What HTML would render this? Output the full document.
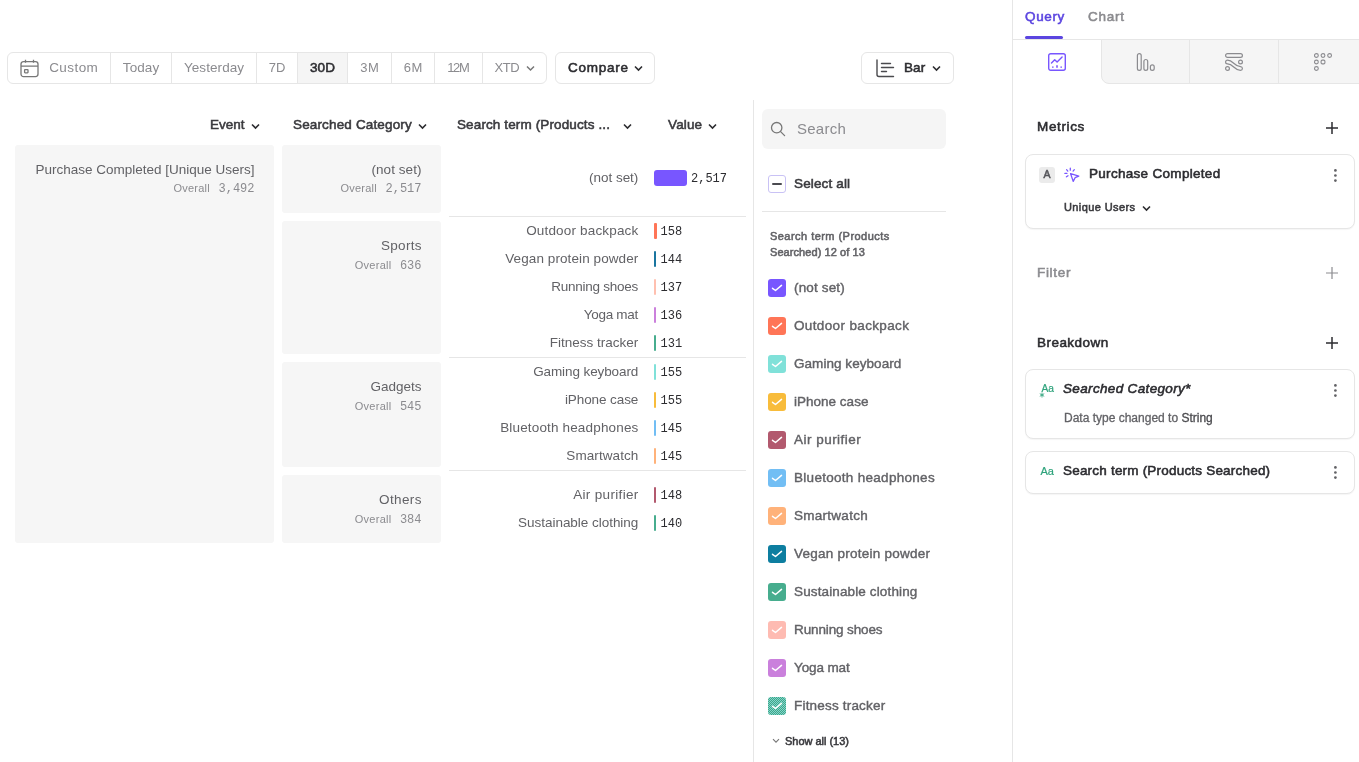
<!DOCTYPE html>
<html><head><meta charset="utf-8">
<style>
*{box-sizing:border-box;margin:0;padding:0}
html,body{width:1359px;height:762px;overflow:hidden;background:#fff}
body{will-change:transform;font-family:"Liberation Sans",sans-serif;color:#626266;position:relative;font-size:13.500px}
.abs{position:absolute}
.t{position:absolute;white-space:nowrap;line-height:1}
.r{text-align:right}
.mono{font-family:"Liberation Mono",monospace}
/* toolbar */
#tb{left:7px;top:52px;width:540px;height:32px;border:1px solid #e6e6e6;border-radius:6px;background:#fff}
.seg{position:absolute;margin-left:-1px;top:0;height:30px;border-left:1px solid #e6e6e6;font-size:13.500px;line-height:29px;text-align:center;color:#8b8b8f}
.btn{position:absolute;top:52px;height:32px;border:1px solid #e6e6e6;border-radius:6px;background:#fff}
.card{position:absolute;background:#f6f6f6;border-radius:3px}
.hl{position:absolute;height:1px;background:#e6e6e6}
.cb{position:absolute;left:768px;width:18px;height:18px;border-radius:3px}
.lg{position:absolute;margin-top:.45px;left:794px;font-size:13.500px;line-height:1;white-space:nowrap;color:#626266;-webkit-text-stroke:.4px}
.bar{position:absolute;left:654px;width:2px;height:16px;border-radius:1px}
.lab{position:absolute;margin-top:.9px;right:720.700px;font-size:13.500px;line-height:1;white-space:nowrap;color:#626266}
.val{position:absolute;margin-top:.7px;left:660.500px;font-size:12px;line-height:1;white-space:nowrap;color:#2c2c30;font-family:"Liberation Mono",monospace}
.pc{position:absolute;left:1025px;width:330px;border:1px solid #e6e6e6;border-radius:8px;background:#fff;box-shadow:0 1px 1px rgba(0,0,0,.04)}
</style></head><body>

<!-- toolbar -->
<div class="abs" id="tb">
  <svg class="abs" style="left:12px;top:6px" width="19" height="19" viewBox="0 0 19 19" fill="none" stroke="#777" stroke-width="1.3"><rect x="1" y="2.6" width="17" height="15" rx="2.5"></rect><path d="M1 7.2h17M5.5 .8v3M13.5 .8v3"></path><rect x="4.6" y="10.6" width="3.4" height="3.2" rx=".5"></rect></svg>
  <div class="seg" style="left: 0px; width: 103px; border-left: 0px; padding-left: 30px; letter-spacing: 0.44px; text-indent: 0.44px;">Custom</div>
  <div class="seg" style="left: 103px; width: 61px; letter-spacing: 0.1px; text-indent: 0.1px;">Today</div>
  <div class="seg" style="left: 164px; width: 85px; letter-spacing: 0.08px; text-indent: 0.08px;">Yesterday</div>
  <div class="seg" style="left: 249px; width: 41px; letter-spacing: 0.07px; text-indent: 0.07px; font-size: 13px;">7D</div>
  <div class="seg" style="left: 290px; width: 50px; background: rgb(245, 245, 245); color: rgb(44, 44, 48); -webkit-text-stroke: 0.55px; letter-spacing: 0.22px; text-indent: 0.22px;">30D</div>
  <div class="seg" style="left: 340px; width: 44px; letter-spacing: 0.39px; text-indent: 0.39px; font-size: 13px;">3M</div>
  <div class="seg" style="left: 384px; width: 43px; letter-spacing: 0.39px; text-indent: 0.39px; font-size: 13px;">6M</div>
  <div class="seg" style="left: 427px; width: 48px; letter-spacing: -1.42px; text-indent: -1.42px; font-size: 13px;">12M</div>
  <div class="seg" style="left: 475px; width: 63px; padding-right: 14px; letter-spacing: -0.4px; text-indent: -0.4px; font-size: 13px;">XTD</div>
  <svg class="abs" style="left:518px;top:12px" width="9" height="7" viewBox="0 0 9 7" fill="none" stroke="#777" stroke-width="1.5"><path d="M1 1.5l3.5 3.5l3.5-3.5"></path></svg>
</div>
<div class="btn" style="left:555px;width:100px">
  <div class="t" style="left: 12px; top: 7.5px; font-size: 13.5px; margin-top: .45px; -webkit-text-stroke: 0.55px; color: rgb(44, 44, 48); letter-spacing: 0.76px;">Compare</div>
  <svg class="abs" style="left:77.500px;top:12px" width="9" height="7" viewBox="0 0 9 7" fill="none" stroke="#2c2c30" stroke-width="1.6"><path d="M1 1.5l3.5 3.5l3.5-3.5"></path></svg>
</div>
<div class="btn" style="left:861px;width:93px">
  <svg class="abs" style="left:14px;top:6px" width="19" height="19" viewBox="0 0 19 19" fill="none" stroke="#4a4a4e" stroke-width="1.4" stroke-linecap="round"><path d="M1 1v14.5q0 2 2 2h14.5"></path><path d="M5.5 4.5h9M5.5 8.5h12M5.500 12.500h5"></path></svg>
  <div class="t" style="left: 42px; top: 7.5px; font-size: 13.5px; margin-top: .45px; -webkit-text-stroke: 0.55px; color: rgb(44, 44, 48); letter-spacing: 0.09px;">Bar</div>
  <svg class="abs" style="left:70px;top:12px" width="9" height="7" viewBox="0 0 9 7" fill="none" stroke="#2c2c30" stroke-width="1.6"><path d="M1 1.5l3.5 3.5l3.5-3.5"></path></svg>
</div>

<!-- column headers -->
<div class="t" style="left: 210px; top: 118px; font-size: 13.5px; margin-top: .45px; -webkit-text-stroke: 0.55px; color: rgb(58, 58, 62); letter-spacing: -0.03px;">Event</div>
<svg class="abs" style="left:250.500px;top:123px" width="9" height="7" viewBox="0 0 9 7" fill="none" stroke="#2c2c30" stroke-width="1.6"><path d="M1 1.500l3.500 3.500l3.500-3.500"></path></svg>
<div class="t" style="left: 293px; top: 118px; font-size: 13.5px; margin-top: .45px; -webkit-text-stroke: 0.55px; color: rgb(58, 58, 62); letter-spacing: 0.15px;">Searched Category</div>
<svg class="abs" style="left:418px;top:123px" width="9" height="7" viewBox="0 0 9 7" fill="none" stroke="#2c2c30" stroke-width="1.6"><path d="M1 1.500l3.500 3.500l3.500-3.500"></path></svg>
<div class="t" style="left: 457px; top: 118px; font-size: 13.5px; margin-top: .45px; -webkit-text-stroke: 0.55px; color: rgb(58, 58, 62); letter-spacing: 0.12px;">Search term (Products ...</div>
<svg class="abs" style="left:622.500px;top:123px" width="9" height="7" viewBox="0 0 9 7" fill="none" stroke="#2c2c30" stroke-width="1.6"><path d="M1 1.500l3.500 3.500l3.500-3.500"></path></svg>
<div class="t" style="left: 668px; top: 118px; font-size: 13.5px; margin-top: .45px; -webkit-text-stroke: 0.55px; color: rgb(58, 58, 62); letter-spacing: 0.14px;">Value</div>
<svg class="abs" style="left:708px;top:123px" width="9" height="7" viewBox="0 0 9 7" fill="none" stroke="#2c2c30" stroke-width="1.6"><path d="M1 1.500l3.500 3.500l3.500-3.500"></path></svg>

<!-- cards -->
<div class="card" style="left:15px;top:145px;width:259px;height:398px"></div>
<div class="t r" style="right: 1104.5px; top: 163px; font-size: 13.5px; margin-top: .45px; letter-spacing: 0px; margin-right: 0px;">Purchase Completed [Unique Users]</div>
<div class="t r" style="right:1104.500px;top:183px;font-size:11px;color:#8b8b8f"><span style="margin-right:8.500px;letter-spacing:.25px">Overall</span><span class="mono" style="font-size:12px">3,492</span></div>

<div class="card" style="left:282px;top:145px;width:159px;height:68px"></div>
<div class="t r" style="right: 937.5px; top: 163px; font-size: 13.5px; margin-top: .45px; letter-spacing: 0.07px; margin-right: -0.07px;">(not set)</div>
<div class="t r" style="right:937.500px;top:183px;font-size:11px;color:#8b8b8f"><span style="margin-right:8.500px;letter-spacing:.25px">Overall</span><span class="mono" style="font-size:12px">2,517</span></div>

<div class="card" style="left:282px;top:221px;width:159px;height:133px"></div>
<div class="t r" style="right: 937.5px; top: 239px; font-size: 13.5px; margin-top: .45px; letter-spacing: 0.29px; margin-right: -0.29px;">Sports</div>
<div class="t r" style="right:937.500px;top:260px;font-size:11px;color:#8b8b8f"><span style="margin-right:8.500px;letter-spacing:.25px">Overall</span><span class="mono" style="font-size:12px">636</span></div>

<div class="card" style="left:282px;top:362px;width:159px;height:105px"></div>
<div class="t r" style="right: 937.5px; top: 380px; font-size: 13.5px; margin-top: .45px; letter-spacing: 0.01px; margin-right: -0.01px;">Gadgets</div>
<div class="t r" style="right:937.500px;top:401px;font-size:11px;color:#8b8b8f"><span style="margin-right:8.500px;letter-spacing:.25px">Overall</span><span class="mono" style="font-size:12px">545</span></div>

<div class="card" style="left:282px;top:475px;width:159px;height:68px"></div>
<div class="t r" style="right: 937.5px; top: 493px; font-size: 13.5px; margin-top: .45px; letter-spacing: 0.38px; margin-right: -0.38px;">Others</div>
<div class="t r" style="right:937.500px;top:514px;font-size:11px;color:#8b8b8f"><span style="margin-right:8.500px;letter-spacing:.25px">Overall</span><span class="mono" style="font-size:12px">384</span></div>

<!-- chart rows -->
<div class="hl" style="left:449px;top:216px;width:297px"></div>
<div class="hl" style="left:449px;top:357px;width:297px"></div>
<div class="hl" style="left:449px;top:470px;width:297px"></div>

<div class="lab" style="top: 170px; letter-spacing: -0.04px; margin-right: 0.04px;">(not set)</div>
<div class="abs" style="left:654px;top:170px;width:33px;height:16px;border-radius:3px;background:#7856ff"></div>
<div class="val" style="left:691px;top:172px">2,517</div>

<div class="lab" style="top: 223px; letter-spacing: 0.17px; margin-right: -0.17px;">Outdoor backpack</div><div class="bar" style="top:223px;background:#ff7557;width:3px"></div><div class="val" style="top:225px">158</div>
<div class="lab" style="top: 251px; letter-spacing: 0.09px; margin-right: -0.09px;">Vegan protein powder</div><div class="bar" style="top:251px;background:#1a759f"></div><div class="val" style="top:253px">144</div>
<div class="lab" style="top: 279px; letter-spacing: -0.24px; margin-right: 0.24px;">Running shoes</div><div class="bar" style="top:279px;background:#ffc0b0"></div><div class="val" style="top:281px">137</div>
<div class="lab" style="top: 307px; letter-spacing: -0.28px; margin-right: 0.28px;">Yoga mat</div><div class="bar" style="top:307px;background:#cb80dc"></div><div class="val" style="top:309px">136</div>
<div class="lab" style="top: 335px; letter-spacing: 0px; margin-right: 0px;">Fitness tracker</div><div class="bar" style="top:335px;background:#47ad8e"></div><div class="val" style="top:337px">131</div>

<div class="lab" style="top: 364px; letter-spacing: -0.1px; margin-right: 0.1px;">Gaming keyboard</div><div class="bar" style="top:364px;background:#80e1d9"></div><div class="val" style="top:366px">155</div>
<div class="lab" style="top: 392px; letter-spacing: -0.09px; margin-right: 0.09px;">iPhone case</div><div class="bar" style="top:392px;background:#f8bc3b"></div><div class="val" style="top:394px">155</div>
<div class="lab" style="top: 420px; letter-spacing: 0.16px; margin-right: -0.16px;">Bluetooth headphones</div><div class="bar" style="top:420px;background:#72bef4"></div><div class="val" style="top:422px">145</div>
<div class="lab" style="top: 448px; letter-spacing: 0.08px; margin-right: -0.08px;">Smartwatch</div><div class="bar" style="top:448px;background:#ffb27a"></div><div class="val" style="top:450px">145</div>

<div class="lab" style="top: 487px; letter-spacing: 0.33px; margin-right: -0.33px;">Air purifier</div><div class="bar" style="top:487px;background:#b2596e"></div><div class="val" style="top:489px">148</div>
<div class="lab" style="top: 515px; letter-spacing: -0.03px; margin-right: 0.03px;">Sustainable clothing</div><div class="bar" style="top:515px;background:#47ad8e"></div><div class="val" style="top:517px">140</div>

<!-- legend panel -->
<div class="abs" style="left:753px;top:100px;width:1px;height:662px;background:#e6e6e6"></div>
<div class="abs" style="left:762px;top:109px;width:184px;height:40px;border-radius:6px;background:#f5f5f5"></div>
<svg class="abs" style="left:770px;top:121px" width="16" height="16" viewBox="0 0 16 16" fill="none" stroke="#777" stroke-width="1.3" stroke-linecap="round"><circle cx="6.7" cy="6.700" r="5.200"></circle><path d="M10.600 10.600l4 4"></path></svg>
<div class="t" style="left: 797px; top: 121px; font-size: 15px; color: rgb(139, 139, 143); letter-spacing: 0.25px;">Search</div>

<div class="abs" style="left:768px;top:175px;width:18px;height:18px;border:1px solid #c9c2f5;border-radius:3px;background:#fff"></div>
<div class="abs" style="left:772px;top:183px;width:10px;height:2px;border-radius:1px;background:#4a4a50"></div>
<div class="t" style="left: 794px; top: 177px; font-size: 13.5px; margin-top: .45px; -webkit-text-stroke: 0.55px; color: rgb(58, 58, 62); letter-spacing: 0.14px;">Select all</div>
<div class="hl" style="left:762px;top:211px;width:184px"></div>
<div class="t" style="left: 770px; top: 231px; font-size: 11px; -webkit-text-stroke: 0.55px; color: rgb(98, 98, 102); letter-spacing: 0.46px;">Search term (Products</div>
<div class="t" style="left: 770px; top: 247px; font-size: 11px; -webkit-text-stroke: 0.55px; color: rgb(98, 98, 102); letter-spacing: 0.07px;">Searched) 12 of 13</div>

<div id="legend">
<div class="cb" style="top:279px;background-color:#7856ff"><svg width="18" height="18" viewBox="0 0 18 18" fill="none" stroke="#fff" stroke-width="1.5" stroke-linecap="round" stroke-linejoin="round"><path d="M4.500 9.300L7.500 11.500L13.500 6.400"></path></svg></div><div class="lg" style="top: 281px; letter-spacing: 0.15px;">(not set)</div>
<div class="cb" style="top:317px;background-color:#ff7557"><svg width="18" height="18" viewBox="0 0 18 18" fill="none" stroke="#fff" stroke-width="1.5" stroke-linecap="round" stroke-linejoin="round"><path d="M4.500 9.300L7.500 11.500L13.500 6.400"></path></svg></div><div class="lg" style="top: 319px; letter-spacing: 0.36px;">Outdoor backpack</div>
<div class="cb" style="top:355px;background-color:#80e1d9"><svg width="18" height="18" viewBox="0 0 18 18" fill="none" stroke="#fff" stroke-width="1.5" stroke-linecap="round" stroke-linejoin="round"><path d="M4.500 9.300L7.500 11.500L13.500 6.400"></path></svg></div><div class="lg" style="top: 357px; letter-spacing: 0.05px;">Gaming keyboard</div>
<div class="cb" style="top:393px;background-color:#f8bc3b"><svg width="18" height="18" viewBox="0 0 18 18" fill="none" stroke="#fff" stroke-width="1.5" stroke-linecap="round" stroke-linejoin="round"><path d="M4.500 9.300L7.500 11.500L13.500 6.400"></path></svg></div><div class="lg" style="top: 395px; letter-spacing: 0.01px;">iPhone case</div>
<div class="cb" style="top:431px;background-color:#b2596e"><svg width="18" height="18" viewBox="0 0 18 18" fill="none" stroke="#fff" stroke-width="1.5" stroke-linecap="round" stroke-linejoin="round"><path d="M4.500 9.300L7.500 11.500L13.500 6.400"></path></svg></div><div class="lg" style="top: 433px; letter-spacing: 0.48px;">Air purifier</div>
<div class="cb" style="top:469px;background-color:#72bef4"><svg width="18" height="18" viewBox="0 0 18 18" fill="none" stroke="#fff" stroke-width="1.5" stroke-linecap="round" stroke-linejoin="round"><path d="M4.500 9.300L7.500 11.500L13.500 6.400"></path></svg></div><div class="lg" style="top: 471px; letter-spacing: 0.29px;">Bluetooth headphones</div>
<div class="cb" style="top:507px;background-color:#ffb27a"><svg width="18" height="18" viewBox="0 0 18 18" fill="none" stroke="#fff" stroke-width="1.5" stroke-linecap="round" stroke-linejoin="round"><path d="M4.500 9.300L7.500 11.500L13.500 6.400"></path></svg></div><div class="lg" style="top: 509px; letter-spacing: 0.27px;">Smartwatch</div>
<div class="cb" style="top:545px;background-color:#0d7ea0"><svg width="18" height="18" viewBox="0 0 18 18" fill="none" stroke="#fff" stroke-width="1.5" stroke-linecap="round" stroke-linejoin="round"><path d="M4.500 9.300L7.500 11.500L13.500 6.400"></path></svg></div><div class="lg" style="top: 547px; letter-spacing: 0.24px;">Vegan protein powder</div>
<div class="cb" style="top:583px;background-color:#47ad8e"><svg width="18" height="18" viewBox="0 0 18 18" fill="none" stroke="#fff" stroke-width="1.5" stroke-linecap="round" stroke-linejoin="round"><path d="M4.500 9.300L7.500 11.500L13.500 6.400"></path></svg></div><div class="lg" style="top: 585px; letter-spacing: 0.13px;">Sustainable clothing</div>
<div class="cb" style="top:621px;background-color:#febbb2"><svg width="18" height="18" viewBox="0 0 18 18" fill="none" stroke="#fff" stroke-width="1.5" stroke-linecap="round" stroke-linejoin="round"><path d="M4.500 9.300L7.500 11.500L13.500 6.400"></path></svg></div><div class="lg" style="top: 623px; letter-spacing: -0.12px;">Running shoes</div>
<div class="cb" style="top:659px;background-color:#ca80dc"><svg width="18" height="18" viewBox="0 0 18 18" fill="none" stroke="#fff" stroke-width="1.5" stroke-linecap="round" stroke-linejoin="round"><path d="M4.500 9.300L7.500 11.500L13.500 6.400"></path></svg></div><div class="lg" style="top: 661px; letter-spacing: -0.12px;">Yoga mat</div>
<div class="cb" style="top:697px;background-color:#41a883;background-image:repeating-conic-gradient(rgba(150,225,235,.75) 0% 25%,transparent 0% 50%);background-size:2px 2px"><svg width="18" height="18" viewBox="0 0 18 18" fill="none" stroke="#fff" stroke-width="1.5" stroke-linecap="round" stroke-linejoin="round"><path d="M4.500 9.300L7.500 11.500L13.500 6.400"></path></svg></div><div class="lg" style="top: 699px; letter-spacing: 0.19px;">Fitness tracker</div>
</div><!--endlegend-->

<svg class="abs" style="left:772px;top:738px" width="8" height="6" viewBox="0 0 8 6" fill="none" stroke="#777" stroke-width="1.1"><path d="M1 1.200l3 3l3-3"></path></svg>
<div class="t" style="left: 785px; top: 736px; font-size: 11px; -webkit-text-stroke: 0.55px; color: rgb(58, 58, 62); letter-spacing: -0.02px;">Show all (13)</div>

<!-- right panel -->
<div class="abs" style="left:1012px;top:0;width:1px;height:762px;background:#e6e6e6"></div>
<div class="t" style="left: 1025px; top: 10px; font-size: 13.5px; margin-top: .45px; -webkit-text-stroke: 0.55px; color: rgb(91, 69, 224); letter-spacing: 0.63px;">Query</div>
<div class="t" style="left: 1088px; top: 10px; font-size: 13.5px; margin-top: .45px; -webkit-text-stroke: 0.55px; color: rgb(139, 139, 143); letter-spacing: 0.77px;">Chart</div>
<div class="abs" style="left:1025px;top:36px;width:38px;height:3px;border-radius:2px;background:#5b45e0"></div>
<div class="abs" style="left:1013px;top:39px;width:346px;height:1px;background:#e6e6e6"></div>
<div class="abs" style="left:1101px;top:39px;width:262px;height:45px;background:#f5f5f5;border:1px solid #e6e6e6;border-radius:0 0 0 8px"></div>
<div class="abs" style="left:1189px;top:40px;width:1px;height:43px;background:#e6e6e6"></div>
<div class="abs" style="left:1278px;top:40px;width:1px;height:43px;background:#e6e6e6"></div>

<div class="t" style="left: 1037px; top: 120px; font-size: 13.5px; margin-top: .45px; -webkit-text-stroke: 0.55px; color: rgb(44, 44, 48); letter-spacing: 0.63px;">Metrics</div>
<div class="t" style="left: 1037px; top: 265px; font-size: 13.5px; margin-top: 1px; -webkit-text-stroke: 0.55px; color: rgb(139, 139, 143); letter-spacing: 0.68px;">Filter</div>
<div class="t" style="left: 1037px; top: 335px; font-size: 13.5px; margin-top: 1px; -webkit-text-stroke: 0.55px; color: rgb(44, 44, 48); letter-spacing: 0.46px;">Breakdown</div>

<div class="pc" style="top:154px;height:75px"></div>
<div class="pc" style="top:369px;height:70px"></div>
<div class="pc" style="top:451px;height:43px"></div>

<div class="abs" style="left:1039px;top:167px;width:16px;height:16px;border-radius:3px;background:#ebebeb"></div>
<div class="t" style="left:1043.600px;top:169.300px;font-size:10.500px;-webkit-text-stroke:.55px;color:#55555a">A</div>
<div class="t" style="left: 1089px; top: 167px; font-size: 13.5px; margin-top: .45px; -webkit-text-stroke: 0.55px; color: rgb(44, 44, 48); letter-spacing: 0.3px;">Purchase Completed</div>
<div class="t" style="left: 1064px; top: 201.7px; font-size: 11px; -webkit-text-stroke: 0.55px; color: rgb(58, 58, 62); letter-spacing: 0.4px;">Unique Users</div>
<svg class="abs" style="left:1141.700px;top:205px" width="9" height="7" viewBox="0 0 9 7" fill="none" stroke="#2c2c30" stroke-width="1.6"><path d="M1 1.500l3.500 3.500l3.500-3.500"></path></svg>

<div class="t" style="left: 1063px; top: 382px; font-size: 13.5px; margin-top: .45px; -webkit-text-stroke: 0.55px; font-style: italic; color: rgb(44, 44, 48); letter-spacing: 0.34px;">Searched Category*</div>
<div class="t" style="left:1064px;top:411.600px;font-size:12px;-webkit-text-stroke:.3px;color:#626266">Data type changed to <span style="color:#4a4a4e">String</span></div>
<div class="t" style="left: 1063px; top: 464px; font-size: 13.5px; margin-top: .45px; -webkit-text-stroke: 0.55px; color: rgb(44, 44, 48); letter-spacing: 0.2px;">Search term (Products Searched)</div>


<!-- icon tabs -->
<svg class="abs" style="left:1047px;top:52px" width="20" height="20" viewBox="0 0 20 20" fill="none" stroke="#7856ff" stroke-width="1.4" stroke-linejoin="round" stroke-linecap="round"><rect x="1.7" y="1.700" width="16.600" height="16.600" rx="2"></rect><path d="M4.500 11l3.200-3.300l2.400 2.300l5-5"></path><path d="M5.800 14.500v1.300M10 13.200v2.600M14.200 14.500v1.300" stroke-linecap="butt" stroke-width="1.6"></path></svg>
<svg class="abs" style="left:1136px;top:52px" width="20" height="20" viewBox="0 0 20 20" fill="none" stroke="#8b8b8f" stroke-width="1.200"><rect x="1.400" y="1.600" width="3.800" height="16.800" rx="1.900"></rect><rect x="7.900" y="7.500" width="3.800" height="10.900" rx="1.900"></rect><rect x="14.400" y="12.800" width="3.800" height="5.600" rx="1.900"></rect></svg>
<svg class="abs" style="left:1224px;top:52px" width="20" height="20" viewBox="0 0 20 20" fill="none" stroke="#8b8b8f" stroke-width="1.200"><rect x="1.600" y="1.600" width="16.800" height="3.800" rx="1.900"></rect><circle cx="16.500" cy="10" r="1.900"></circle><circle cx="3.500" cy="16.500" r="1.900"></circle><path d="M3.500 8.100c6 0 6.500 6.500 13 6.500a1.900 1.900 0 0 1 0 3.800c-6.500 0-7-6.500-13-6.500a1.900 1.900 0 0 1 0-3.800z"></path></svg>
<svg class="abs" style="left:1313px;top:52px" width="20" height="20" viewBox="0 0 20 20" fill="none" stroke="#8b8b8f" stroke-width="1.100"><circle cx="3.400" cy="3.500" r="1.900"></circle><circle cx="10" cy="3.500" r="1.900"></circle><circle cx="16.600" cy="3.500" r="1.900"></circle><circle cx="3.400" cy="10" r="1.900"></circle><rect x="8.100" y="8.100" width="3.800" height="3.800" rx="1.200"></rect><circle cx="3.400" cy="16.500" r="1.900"></circle></svg>
<!-- plus icons -->
<svg class="abs" style="left:1325px;top:121px" width="14" height="14" viewBox="0 0 14 14" stroke="#2c2c30" stroke-width="1.500"><path d="M1 7h12M7 1v12"></path></svg>
<svg class="abs" style="left:1325px;top:266px" width="14" height="14" viewBox="0 0 14 14" stroke="#8b8b8f" stroke-width="1.200"><path d="M1 7h12M7 1v12"></path></svg>
<svg class="abs" style="left:1325px;top:336px" width="14" height="14" viewBox="0 0 14 14" stroke="#2c2c30" stroke-width="1.500"><path d="M1 7h12M7 1v12"></path></svg>
<!-- kebabs -->
<svg class="abs" style="left:1333px;top:168px" width="5" height="15" viewBox="0 0 5 15" fill="#626266"><circle cx="2.400" cy="2.400" r="1.350"></circle><circle cx="2.400" cy="7.500" r="1.350"></circle><circle cx="2.400" cy="12.600" r="1.350"></circle></svg>
<svg class="abs" style="left:1333px;top:383px" width="5" height="15" viewBox="0 0 5 15" fill="#626266"><circle cx="2.400" cy="2.400" r="1.350"></circle><circle cx="2.400" cy="7.500" r="1.350"></circle><circle cx="2.400" cy="12.600" r="1.350"></circle></svg>
<svg class="abs" style="left:1333px;top:465px" width="5" height="15" viewBox="0 0 5 15" fill="#626266"><circle cx="2.400" cy="2.400" r="1.350"></circle><circle cx="2.400" cy="7.500" r="1.350"></circle><circle cx="2.400" cy="12.600" r="1.350"></circle></svg>
<!-- click icon -->
<svg class="abs" style="left:1064px;top:167px" width="16" height="16" viewBox="0 0 16 16" fill="none" stroke="#7856ff" stroke-width="1.300" stroke-linecap="round" stroke-linejoin="round"><path d="M6.600 6.700l8.200 2.400l-3.700 1.600l-1.900 3.700z"></path><path d="M6.300 1.200v2M2.600 2.700l1.200 1.400M0.900 6.400h2M2.400 9.800l1.600-1M10.300 2.700l-1.200 1.400"></path></svg>
<!-- Aa icons -->
<div class="t" style="left:1041.500px;top:384px;font-size:10.200px;color:#2fa37c;-webkit-text-stroke:.2px">Aa</div>
<svg class="abs" style="left:1038.600px;top:392.200px" width="6" height="6" viewBox="0 0 6 6" stroke="#2fa37c" stroke-width=".85" fill="none"><path d="M3 .5v5M.8 1.700l4.400 2.600M5.200 1.700l-4.400 2.600"></path></svg>
<div class="t" style="left:1040.500px;top:466px;font-size:11px;color:#2fa37c;-webkit-text-stroke:.2px">Aa</div>

</body></html>
